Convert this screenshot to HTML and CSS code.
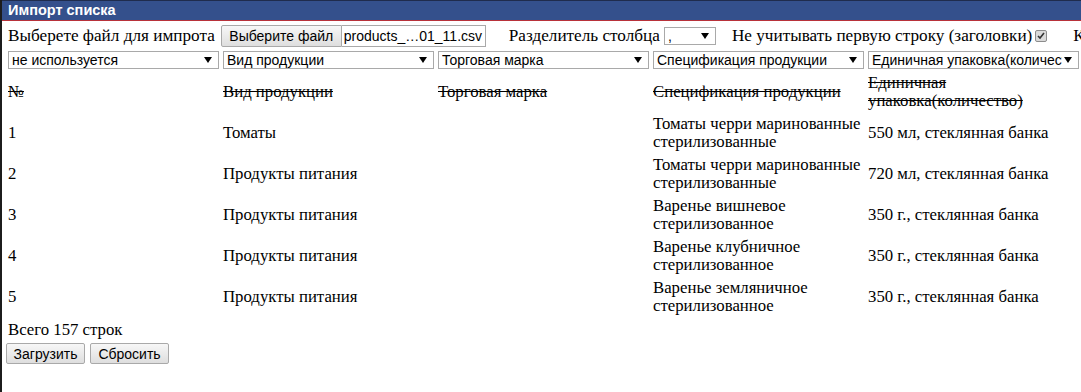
FILE: index.html
```html
<!DOCTYPE html>
<html lang="ru">
<head>
  <meta charset="UTF-8" />
  <title>Импорт списка</title>
  <link rel="stylesheet" href="styles.css">
</head>
<body>
  <div class="dialog">
    <div class="dialog-title">Импорт списка</div>

    <div class="dialog-body">
      <!-- Параметры файла -->
      <div class="options">
        <span class="label">Выберете файл для импрота</span>
        <span class="file-input">
          <button class="btn file-btn">Выберите файл</button><span class="file-name">products_…01_11.csv</span>
        </span>
        <span class="label sep-label">Разделитель столбца</span>
        <select class="sel sel-small"><option>,</option></select>
        <span class="label skip-label">Не учитывать первую строку (заголовки)</span>
        <input type="checkbox" class="check" checked>
        <span class="label enc-label">Кодировка</span>
      </div>

      <!-- Соответствие столбцов -->
      <div class="mapping">
        <select class="sel sel-col"><option>не используется</option></select>
        <select class="sel sel-col"><option>Вид продукции</option></select>
        <select class="sel sel-col"><option>Торговая марка</option></select>
        <select class="sel sel-col"><option>Спецификация продукции</option></select>
        <select class="sel sel-col"><option>Единичная упаковка(количество)</option></select>
        <select class="sel sel-col"><option>не используется</option></select>
      </div>

      <table class="preview">
        <thead>
          <tr>
            <th>№</th>
            <th>Вид продукции</th>
            <th>Торговая марка</th>
            <th>Спецификация продукции</th>
            <th>Единичная упаковка(количество)</th>
            <th>Цена</th>
          </tr>
        </thead>
        <tbody>
          <tr>
            <td>1</td>
            <td>Томаты</td>
            <td></td>
            <td>Томаты черри маринованные стерилизованные</td>
            <td>550 мл, стеклянная банка</td>
            <td>,</td>
          </tr>
          <tr>
            <td>2</td>
            <td>Продукты питания</td>
            <td></td>
            <td>Томаты черри маринованные стерилизованные</td>
            <td>720 мл, стеклянная банка</td>
            <td>,</td>
          </tr>
          <tr>
            <td>3</td>
            <td>Продукты питания</td>
            <td></td>
            <td>Варенье вишневое стерилизованное</td>
            <td>350 г., стеклянная банка</td>
            <td>,</td>
          </tr>
          <tr>
            <td>4</td>
            <td>Продукты питания</td>
            <td></td>
            <td>Варенье клубничное стерилизованное</td>
            <td>350 г., стеклянная банка</td>
            <td>,</td>
          </tr>
          <tr>
            <td>5</td>
            <td>Продукты питания</td>
            <td></td>
            <td>Варенье земляничное стерилизованное</td>
            <td>350 г., стеклянная банка</td>
            <td>,</td>
          </tr>
        </tbody>
      </table>

      <div class="total">Всего 157 строк</div>

      <div class="actions">
        <button class="btn">Загрузить</button>
        <button class="btn">Сбросить</button>
      </div>
    </div>
  </div>
</body>
</html>
```

FILE: styles.css
```css
body {
  margin: 0;
  overflow: hidden;
  background: #fff;
  font-family: "Liberation Serif", "Times New Roman", serif;
  font-size: 16.75px;
  color: #000;
}
.dialog {
  width: 1500px;
  height: 392px;
  border-left: 2px solid #1c1c1c;
}
.dialog-title {
  height: 19px;
  line-height: 19px;
  padding-left: 6px;
  background: #34508c;
  border-top: 1px solid #1f2c4d;
  border-bottom: 1px solid #b8323a;
  color: #fff;
  font-family: "Liberation Sans", Arial, sans-serif;
  font-weight: bold;
  font-size: 14.5px;
}
.dialog-body {
  padding: 4px 6px 0;
}
.options {
  display: flex;
  align-items: center;
  height: 22px;
  white-space: nowrap;
  font-size: 17.2px;
}
.file-input {
  display: flex;
  margin-left: 6px;
}
.btn {
  height: 22px;
  padding: 0 6px;
  border: 1px solid #a9a9a9;
  border-radius: 2px;
  background: linear-gradient(#f7f7f7, #dedede);
  font-family: "Liberation Sans", Arial, sans-serif;
  font-size: 14px;
  color: #000;
}
.file-btn {
  width: 121px;
  border-radius: 2px 0 0 2px;
}
.file-name {
  width: 144px;
  height: 22px;
  line-height: 20px;
  padding-left: 2px;
  box-sizing: border-box;
  border: 1px solid #a9a9a9;
  border-left: none;
  overflow: hidden;
  font-family: "Liberation Sans", Arial, sans-serif;
  font-size: 14px;
}
.sep-label {
  margin-left: 23px;
}
.sel {
  -webkit-appearance: none;
  appearance: none;
  height: 18px;
  padding: 0 16px 0 3px;
  border: 1px solid #a9a9a9;
  border-radius: 0;
  background: #fff url("data:image/svg+xml,%3Csvg xmlns='http://www.w3.org/2000/svg' width='8' height='6'%3E%3Cpath d='M0 0h8L4 6z' fill='%23000'/%3E%3C/svg%3E") no-repeat right 6px center;
  font-family: "Liberation Sans", Arial, sans-serif;
  font-size: 14px;
  line-height: 16px;
  color: #000;
}
.sel-small {
  width: 52px;
  margin-left: 4px;
}
.skip-label {
  margin-left: 16px;
}
.check {
  -webkit-appearance: none;
  appearance: none;
  width: 12px;
  height: 12px;
  margin: 0 0 0 3px;
  border: 1px solid #8c8c8c;
  border-radius: 2px;
  background: #dadada url("data:image/svg+xml,%3Csvg xmlns='http://www.w3.org/2000/svg' width='10' height='10'%3E%3Cpath d='M2 5l2 2 4-5' stroke='%23333' stroke-width='1.6' fill='none'/%3E%3C/svg%3E") no-repeat center;
}
.enc-label {
  margin-left: 26px;
}
.mapping {
  display: flex;
  gap: 4px;
  margin-top: 4px;
  white-space: nowrap;
}
.sel-col {
  width: 211px;
  flex: none;
}
.preview {
  margin-top: 2px;
  border-collapse: collapse;
  table-layout: fixed;
  width: 1290px;
}
.preview th,
.preview td {
  width: 215px;
  padding: 3px 0 2px;
  line-height: 18px;
  height: 36px;
  text-align: left;
  vertical-align: middle;
}
.preview th {
  font-weight: normal;
  text-decoration: line-through;
}
.total {
  margin-top: 4px;
  line-height: 18px;
}
.actions {
  display: flex;
  gap: 5px;
  margin: 4px 0 0 -2px;
}
.actions .btn {
  width: 79px;
  height: 21px;
  padding: 0;
}
```
